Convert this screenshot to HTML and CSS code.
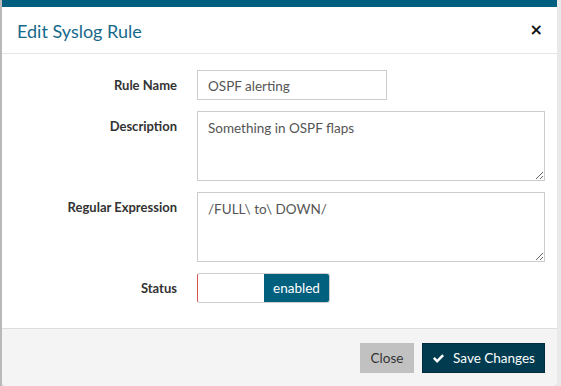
FILE: index.html
```html
<!DOCTYPE html>
<html lang="en">
<head>
    <meta charset="UTF-8" />
    <title>Edit Syslog Rule</title>
    <link rel="stylesheet" href="styles.css">
</head>
<body>
    <div class="modal">
        <div class="modal-header">
            <h4 class="modal-title">Edit Syslog Rule</h4>
            <button class="close" type="button" aria-label="Close">&times;</button>
        </div>
        <form class="modal-body">
            <label class="field-label">Rule Name</label>
            <input class="field field-short" type="text" value="OSPF alerting">

            <label class="field-label">Description</label>
            <textarea class="field field-area">Something in OSPF flaps</textarea>

            <label class="field-label">Regular Expression</label>
            <textarea class="field field-area">/FULL\ to\ DOWN/</textarea>

            <label class="field-label">Status</label>
            <div class="toggle">
                <span class="toggle-off"></span>
                <span class="toggle-on">enabled</span>
            </div>
        </form>
        <div class="modal-footer">
            <button class="btn btn-close" type="button">Close</button>
            <button class="btn btn-save" type="button">
                <svg class="check" viewBox="0 0 16 16" aria-hidden="true">
                    <path d="M1.2 8.4 L3.4 6.2 L6.3 9.1 L12.6 2.8 L14.8 5 L6.3 13.5 Z" fill="#fff"/>
                </svg>
                <span>Save Changes</span>
            </button>
        </div>
    </div>
</body>
</html>
```

FILE: styles.css
```css
html, body {
    margin: 0;
    height: 100%;
}
body {
    background: #e9e9e9;
    border-left: 2px solid #b9b9b9;
    box-sizing: border-box;
    font-family: "Lato", "Liberation Sans", sans-serif;
    font-size: 14px;
    color: #333;
}
.modal {
    width: 555px;
    height: 386px;
    box-sizing: border-box;
    background: #fff;
    border-top: 7px solid #025f80;
    border-radius: 0 0 6px 6px;
    display: flex;
    flex-direction: column;
    overflow: hidden;
}
.modal-header {
    height: 47px;
    box-sizing: border-box;
    display: flex;
    align-items: center;
    justify-content: space-between;
    padding: 2px 14px 0 15px;
    border-bottom: 1px solid #e5e5e5;
}
.modal-title {
    margin: 0;
    font-size: 18px;
    font-weight: 400;
    color: #16698b;
}
.close {
    background: none;
    border: 0;
    padding: 0 0 2px;
    font-family: "DejaVu Sans", sans-serif;
    font-size: 16px;
    font-weight: 700;
    line-height: 1;
    color: #111;
}
.modal-body {
    margin: 0;
    padding: 16px 12px 25px 15px;
    display: grid;
    grid-template-columns: 160px 1fr;
    column-gap: 20px;
    row-gap: 11px;
    align-items: start;
}
.field-label {
    text-align: right;
    font-weight: 700;
    font-size: 13px;
    line-height: 18px;
    padding-top: 6px;
    color: #333;
}
.field {
    box-sizing: border-box;
    border: 1px solid #ccc;
    border-radius: 0;
    padding: 7px 10px 5px;
    font-family: inherit;
    font-size: 13.5px;
    line-height: 16px;
    color: #555;
    background: #fff;
    margin: 0;
}
.field-short {
    width: 190px;
    height: 30px;
}
.field-area {
    width: 100%;
    height: 70px;
    resize: vertical;
    padding-top: 8px;
}
.toggle {
    width: 133px;
    height: 30px;
    box-sizing: border-box;
    border: 1px solid #ccc;
    border-left: 1px solid #d9534f;
    border-radius: 3px;
    display: flex;
    overflow: hidden;
}
.toggle-off {
    width: 66px;
    background: #fff;
}
.toggle-on {
    flex: 1;
    background: #02607f;
    color: #fff;
    display: flex;
    align-items: center;
    justify-content: center;
    font-size: 13.5px;
}
.modal-footer {
    flex: 1;
    background: #f4f4f4;
    border-top: 1px solid #ddd;
    display: flex;
    justify-content: flex-end;
    align-items: flex-start;
    gap: 8px;
    padding: 14px 12px 0 0;
}
.btn {
    height: 30px;
    box-sizing: border-box;
    border: 1px solid transparent;
    border-radius: 0;
    font-family: inherit;
    font-size: 13.5px;
    display: flex;
    align-items: center;
    justify-content: center;
    white-space: nowrap;
    padding: 0;
}
.btn-close {
    width: 54px;
    background: #c1c1c1;
    color: #333;
}
.btn-save {
    width: 123px;
    gap: 8px;
    background: #003b50;
    border-color: #002c3d;
    color: #fff;
}
.check {
    width: 13px;
    height: 13px;
}
```
